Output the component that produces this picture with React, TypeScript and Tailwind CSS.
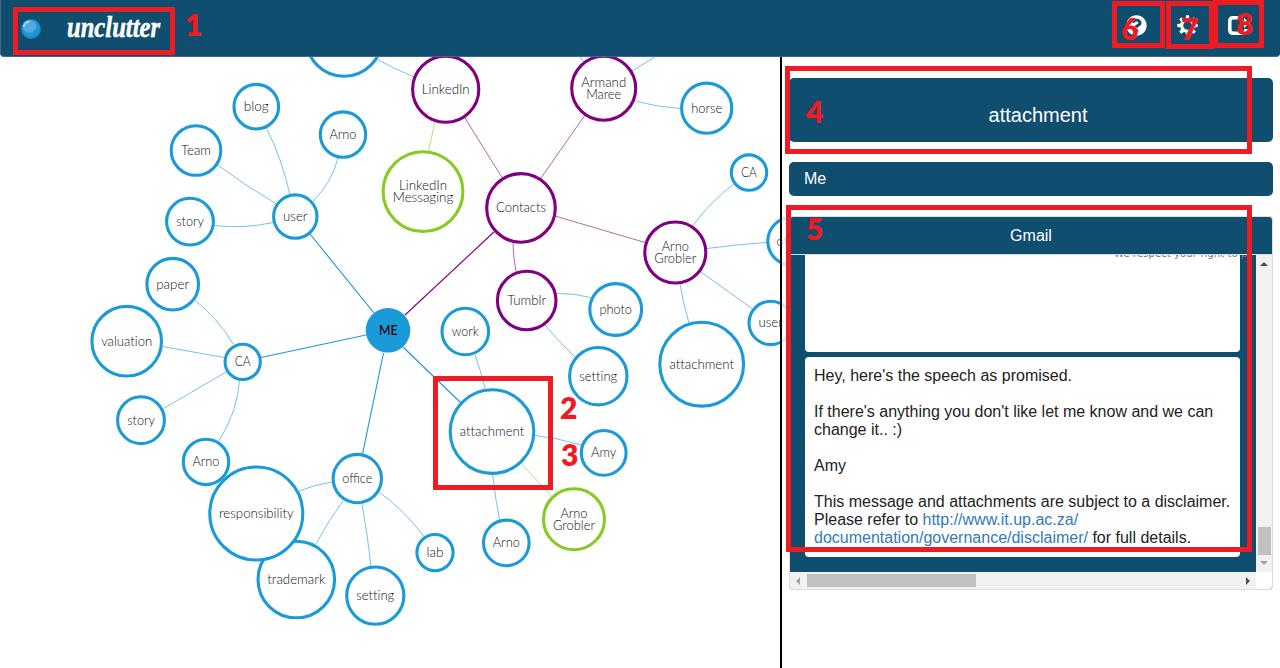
import React from "react";
import { FaQuestionCircle } from "react-icons/fa";

const BLUE = "#1b9ad8";
const PURPLE = "#800080";
const GREEN = "#86cb22";

type Line = [text: string, width: number];
type GraphNode = { x: number; y: number; r: number; color: string; lines: Line[] };
type Edge = { d: string; color: string; strong?: boolean };

const node = (x: number, y: number, r: number, color: string, ...lines: Line[]): GraphNode => ({ x, y, r, color, lines });

const nodes: GraphNode[] = [
  node(344, 38, 37.9, BLUE),
  node(256.3, 106.5, 22.2, BLUE, ["blog", 25]),
  node(343, 134.4, 22.6, BLUE, ["Arno", 27]),
  node(196, 150.3, 24.7, BLUE, ["Team", 30]),
  node(190, 221.4, 23.3, BLUE, ["story", 27.5]),
  node(295.3, 216.4, 21.6, BLUE, ["user", 24.5]),
  node(445.7, 89, 33, PURPLE, ["LinkedIn", 48]),
  node(423, 191.4, 39.8, GREEN, ["LinkedIn", 48], ["Messaging", 60.5]),
  node(521, 207.7, 34.2, PURPLE, ["Contacts", 50]),
  node(603.7, 88, 31.9, PURPLE, ["Armand", 45], ["Maree", 35]),
  node(706.7, 108, 25, BLUE, ["horse", 31]),
  node(749, 172.4, 17.6, BLUE, ["CA", 16]),
  node(675.3, 252.3, 30.4, PURPLE, ["Arno", 27], ["Grobler", 42]),
  node(615.7, 309.3, 25.8, BLUE, ["photo", 32.5]),
  node(598.3, 376, 28.6, BLUE, ["setting", 38]),
  node(701.7, 364, 41.8, BLUE, ["attachment", 64.5]),
  node(770.7, 322.7, 21.6, BLUE, ["user", 24.5]),
  node(791.6, 241, 23.7, BLUE, ["office", 30]),
  node(172.7, 284, 25.7, BLUE, ["paper", 33]),
  node(126.7, 341, 34.7, BLUE, ["valuation", 51]),
  node(242.7, 361.7, 17.5, BLUE, ["CA", 16]),
  node(141, 420, 23.3, BLUE, ["story", 27.5]),
  node(206, 461.7, 22.6, BLUE, ["Arno", 27]),
  node(357.3, 478.4, 24.1, BLUE, ["office", 30]),
  node(296.3, 579.3, 38.2, BLUE, ["trademark", 58]),
  node(256.3, 513.3, 46.4, BLUE, ["responsibility", 74.5]),
  node(375.3, 595.4, 28.5, BLUE, ["setting", 38]),
  node(435, 552.4, 18, BLUE, ["lab", 17]),
  node(526.7, 300.3, 29.2, PURPLE, ["Tumblr", 39]),
  node(465.3, 331.3, 23.2, BLUE, ["work", 27]),
  node(492, 431.4, 41.7, BLUE, ["attachment", 64.5]),
  node(603.7, 452.7, 22.3, BLUE, ["Amy", 25.5]),
  node(574, 519, 30.4, GREEN, ["Arno", 27], ["Grobler", 42]),
  node(506.3, 542.7, 22.7, BLUE, ["Arno", 27]),
];

const edges: Edge[] = [
  { d: "M266 127Q282 159 290 195", color: BLUE },
  { d: "M338 158Q332 182 313 201.5", color: BLUE },
  { d: "M217.5 165Q246 186 276.5 204", color: BLUE },
  { d: "M214 225.5Q243 229 273 222.5", color: BLUE },
  { d: "M310 234L374 313", color: BLUE, strong: true },
  { d: "M376 58.5Q394 69 413 76.5", color: BLUE },
  { d: "M435 122L428.5 151", color: GREEN },
  { d: "M465 118L502 177.5", color: PURPLE },
  { d: "M541 178L585 115", color: PURPLE },
  { d: "M555 216L645 242.5", color: PURPLE },
  { d: "M513 242Q513 257 516 271", color: PURPLE },
  { d: "M494.500 231.500L405 315", color: PURPLE, strong: true },
  { d: "M557 293.500Q574 293 590.500 297.500", color: BLUE },
  { d: "M545 325Q559 342 575 357", color: BLUE },
  { d: "M579 55L584 62", color: BLUE },
  { d: "M632 71L658 55", color: BLUE },
  { d: "M635 101Q657 107 680 108.500", color: BLUE },
  { d: "M693 225.500Q711 201 734 184", color: BLUE },
  { d: "M707 248.500Q736 244.500 767 242.500", color: BLUE },
  { d: "M701 272L752 308.500", color: BLUE },
  { d: "M680 284Q683 303 689 323", color: BLUE },
  { d: "M475 355Q481 371 485 388.500", color: BLUE },
  { d: "M403 347L461 403", color: BLUE, strong: true },
  { d: "M535 435.500Q558 438 581 445", color: BLUE },
  { d: "M492.700 474Q495 497 499.500 520", color: BLUE },
  { d: "M521 463.500L552 496.500", color: GREEN },
  { d: "M383.500 353L362.500 454", color: BLUE, strong: true },
  { d: "M366 335L261 357.500", color: BLUE, strong: true },
  { d: "M195 300Q219 320 233 344", color: BLUE },
  { d: "M162.500 346.500L224 357.500", color: BLUE },
  { d: "M163.500 408.500L226 372", color: BLUE },
  { d: "M239.700 380Q237 412 219 441", color: BLUE },
  { d: "M299 491Q315 484.500 332 482", color: BLUE },
  { d: "M343 501Q328 521 316 544", color: BLUE },
  { d: "M362 504Q368 537 371 567", color: BLUE },
  { d: "M379.500 492.500Q402 508 424 536.500", color: BLUE },
];

function Graph() {
  return (
    <svg viewBox="0 57 800 611" width="800" height="611" className="block shrink-0" fontFamily="Lato, sans-serif">
      {edges.map((e) => (
        <path key={e.d} d={e.d} fill="none" stroke={e.color} strokeWidth={e.strong ? 1.15 : 1} strokeOpacity={e.strong ? 1 : 0.6} />
      ))}
      {nodes.map((n) => (
        <g key={`${n.x}-${n.y}`}>
          <circle cx={n.x} cy={n.y + 0.2} r={n.r + 0.1} fill="#fff" stroke={n.color} strokeWidth="3.1" />
          {n.lines.map(([text, width], i) => (
            <text
              key={text}
              className={text === "office" ? "" : "[font-variant-ligatures:none]"}
              x={n.x - width / 2}
              y={n.y + (n.lines.length === 2 ? -1.3 + i * 12 : 4.5)}
              fontSize="13.3"
              fontWeight="300"
              fill="#111"
              textLength={width}
              lengthAdjust="spacingAndGlyphs"
            >
              {text}
            </text>
          ))}
        </g>
      ))}
      <circle cx="388" cy="330.300" r="22.300" fill={BLUE} />
      <text x="379" y="335" fontSize="13" fontWeight="500" textLength="18.500" lengthAdjust="spacingAndGlyphs">
        ME
      </text>
    </svg>
  );
}

function Logo() {
  return (
    <div className="flex items-center gap-[25px]">
      <svg width="20" height="20" viewBox="0 0 20 20">
        <circle cx="10" cy="10" r="10" fill="#1681bf" />
        <circle cx="10" cy="9.500" r="9" fill="#1d96d6" />
        <ellipse cx="8.500" cy="7.500" rx="6.800" ry="6.300" fill="#55a9e2" />
        <path d="M2.800 7.200Q4 3.200 8 2.600" fill="none" stroke="#b5daf4" strokeWidth="1.500" strokeLinecap="round" />
      </svg>
      <svg width="98" height="32" viewBox="0 0 98 32">
        <text
          x="1"
          y="24"
          fontFamily="'Liberation Serif', serif"
          fontStyle="italic"
          fontWeight="700"
          fontSize="29"
          fill="#fff"
          stroke="#fff"
          strokeWidth="0.500"
          textLength="93"
          lengthAdjust="spacingAndGlyphs"
        >
          unclutter
        </text>
      </svg>
    </div>
  );
}

const teeth = [0, 45, 90, 135, 180, 225, 270, 315];

function CogIcon() {
  return (
    <svg width="21" height="21" viewBox="0 0 21 21">
      {teeth.map((a) => (
        <path key={a} d="M9 0.300H12L12.500 4.500H8.500Z" fill="#fff" transform={`rotate(${a} 10.5 10.5)`} />
      ))}
      <circle cx="10.500" cy="10.500" r="5.800" fill="none" stroke="#fff" strokeWidth="3" />
    </svg>
  );
}

function LogoutIcon() {
  return (
    <svg width="24" height="21" viewBox="0 0 24 21">
      <path d="M18 14V14.800Q18 18.300 14.500 18.300H5.200Q1.800 18.300 1.800 14.800V6.200Q1.800 2.800 5.200 2.800H12" fill="none" stroke="#fff" strokeWidth="3.500" />
      <path d="M16 3L22 8L16 13V10H12V6H16Z" fill="#fff" />
    </svg>
  );
}

function Header() {
  return (
    <header className="flex h-[57px] shrink-0 items-start justify-between rounded-b border-b border-l border-[#49638e] bg-[#104e70] pr-[28px] pl-5">
      <div className="pt-[13px]">
        <Logo />
      </div>
      <nav className="flex items-center gap-[30px] pt-[15px]">
        <FaQuestionCircle size={21} color="#fff" />
        <CogIcon />
        <LogoutIcon />
      </nav>
    </header>
  );
}

function Arrow({ className, d, fill }: { className?: string; d: string; fill: string }) {
  return (
    <svg width="8" height="8" viewBox="0 0 8 8" className={className}>
      <path d={d} fill={fill} />
    </svg>
  );
}

function MailPanel() {
  return (
    <section className="mt-5 flex h-[374px] flex-col overflow-hidden rounded border border-[#ddd] bg-[#104e70]">
      <h3 className="h-[38px] shrink-0 border-b border-[#ddd] text-center text-base leading-[37px] text-white">Gmail</h3>
      <div className="flex h-[317px] shrink-0">
        <div className="flex w-[466px] flex-col gap-[5px] overflow-hidden pl-[15px]">
          <div className="h-[97px] w-[435px] shrink-0 rounded-b bg-white">
            <p className="-mt-[7px] ml-[309px] font-['DejaVu_Sans'] text-[10.2px] leading-[12px] whitespace-nowrap text-[#777]">
              We respect your right to pr
            </p>
          </div>
          <div className="h-[200px] w-[435px] shrink-0 rounded bg-white pt-[10px] pl-[9px] text-base leading-[18px] whitespace-nowrap text-[#222]">
            <p>Hey, here's the speech as promised.</p>
            <p className="mt-[18px]">
              If there's anything you don't like let me know and we can
              <br />
              change it.. :)
            </p>
            <p className="mt-[18px]">Amy</p>
            <p className="mt-[18px]">
              This message and attachments are subject to a disclaimer.
              <br />
              Please refer to <a className="text-[#337ab7]">http://www.it.up.ac.za/</a>
              <br />
              <a className="text-[#337ab7]">documentation/governance/disclaimer/</a> for full details.
            </p>
          </div>
        </div>
        <div className="flex w-4 flex-col items-center bg-[#f1f1f1] pt-[5px] pb-[5px]">
          <Arrow d="M0 6L4 2L8 6Z" fill="#505050" />
          <div className="mt-auto h-7 w-[13px] bg-[#c1c1c1]" />
          <Arrow className="mt-1" d="M0 2L4 6L8 2Z" fill="#a3a3a3" />
        </div>
      </div>
      <div className="flex min-h-0 flex-1 bg-white">
        <div className="flex w-[466px] items-center bg-[#f1f1f1] pr-1 pl-[4px]">
          <Arrow d="M6 0L2 4L6 8Z" fill="#a3a3a3" />
          <div className="ml-[5px] h-[13px] w-[169px] bg-[#c1c1c1]" />
          <Arrow className="ml-auto" d="M2 0L6 4L2 8Z" fill="#505050" />
        </div>
      </div>
    </section>
  );
}

function Sidebar() {
  return (
    <aside className="flex w-[500px] shrink-0 flex-col border-l-2 border-black bg-white/80 pr-[7px] pl-[7px] pt-[21px]">
      <h2 className="h-16 shrink-0 rounded-[5px] bg-[#104e70] pt-[5px] pl-[14px] text-center text-xl leading-[64px] text-white">attachment</h2>
      <div className="mt-5 h-[34px] shrink-0 rounded-[5px] bg-[#104e70] pl-[15px] text-base leading-[33px] text-white">Me</div>
      <MailPanel />
    </aside>
  );
}

/* Numbered callouts float above the page. */
function Callouts() {
  return (
    <div className="pointer-events-none absolute inset-0 font-['Lato'] text-[30px] leading-[30px] font-extrabold text-[#ed1c24]">
      <div className="absolute top-[7px] left-[13px] h-[48px] w-[162px] border-5 border-[#ed1c24]" />
      <div className="absolute top-[376px] left-[433px] h-[114px] w-[120px] border-5 border-[#ed1c24]" />
      <div className="absolute top-[66px] left-[785px] h-[88px] w-[467px] border-5 border-[#ed1c24]" />
      <div className="absolute top-[205px] left-[786px] h-[347px] w-[466px] border-5 border-[#ed1c24]" />
      <div className="absolute top-px left-[1112px] h-[47px] w-[53px] border-5 border-[#ed1c24]" />
      <div className="absolute top-px left-[1166px] h-[48px] w-[48px] border-5 border-[#ed1c24]" />
      <div className="absolute top-0 left-[1213px] h-[48px] w-[51px] border-5 border-[#ed1c24]" />
      <span className="absolute top-[9px] left-[185px]">1</span>
      <span className="absolute top-[392px] left-[560px]">2</span>
      <span className="absolute top-[439px] left-[561px]">3</span>
      <span className="absolute top-[96px] left-[806px]">4</span>
      <span className="absolute top-[213px] left-[806px]">5</span>
      <span className="absolute top-[13px] left-[1121px]">6</span>
      <span className="absolute top-[13px] left-[1181px]">7</span>
      <span className="absolute top-[8px] left-[1236px]">8</span>
    </div>
  );
}

export default function App() {
  return (
    <div className="relative flex h-[668px] w-[1280px] flex-col overflow-hidden bg-white font-['Liberation_Sans',Arial,sans-serif]">
      <Header />
      <main className="flex min-h-0 flex-1">
        <Graph />
        <div className="relative z-0 -ml-5 flex">
          <Sidebar />
        </div>
      </main>
      <Callouts />
    </div>
  );
}
